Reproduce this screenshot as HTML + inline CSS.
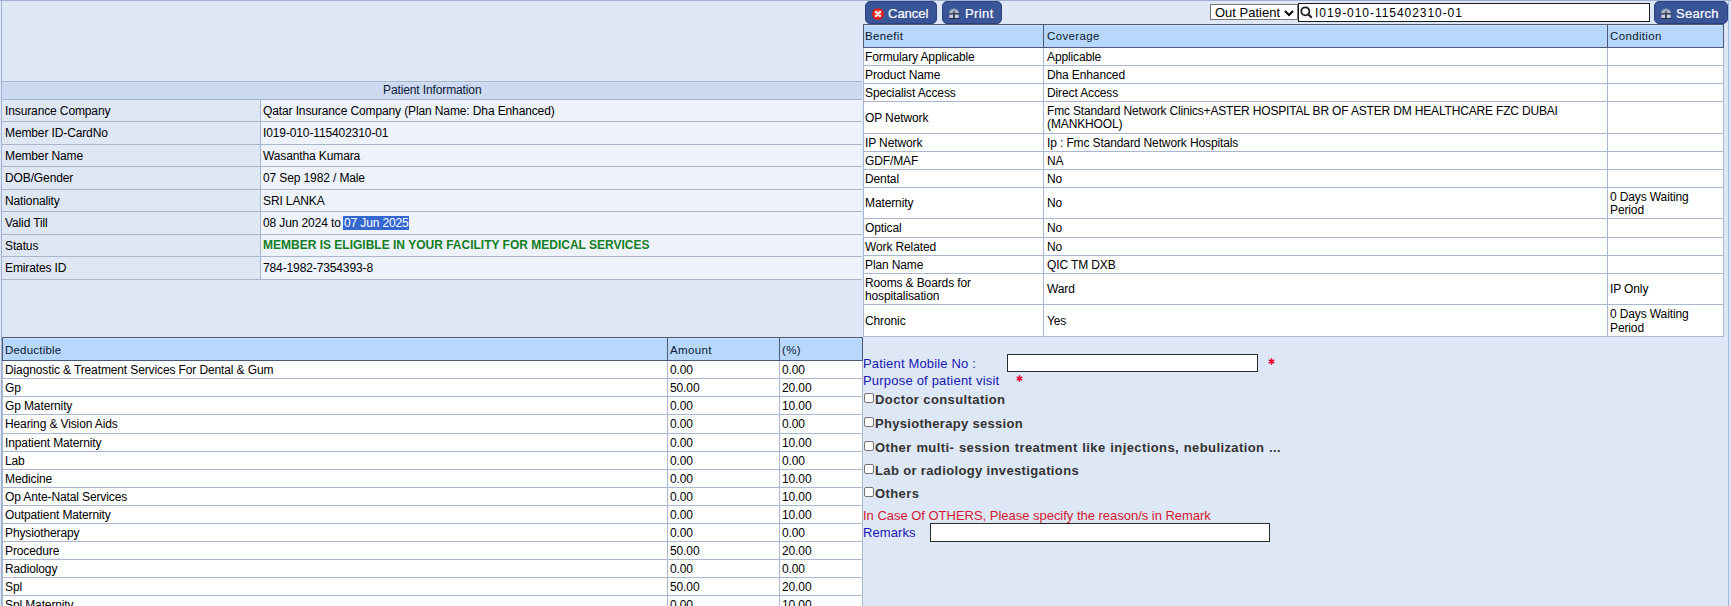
<!DOCTYPE html>
<html><head><meta charset="utf-8"><style>
html,body{margin:0;padding:0;}
body{width:1731px;height:606px;overflow:hidden;position:relative;background:#dee7f5;font-family:"Liberation Sans", sans-serif;}
.a{position:absolute;}
.t{position:absolute;white-space:nowrap;line-height:normal;letter-spacing:-0.12px;}
.t b{letter-spacing:0;}
.h{letter-spacing:0.35px;}
.m{font-size:12px;line-height:13px;color:#000;}
.sel{background:#3468d0;color:#fff;margin-left:-1px;padding-left:1px;}
.btn{position:absolute;top:1px;height:23px;box-sizing:border-box;background:#3a5597;border:1px solid #2c427f;border-radius:5px;}
.btn span{position:absolute;top:4px;color:#fff;font-size:13px;line-height:15px;white-space:nowrap;-webkit-text-stroke:0.2px #fff;}
.ic{position:absolute;}
.sel-box{position:absolute;left:1210px;top:4px;width:88px;height:16px;box-sizing:border-box;background:#fff;border:1px solid #767676;}
.sel-box span{position:absolute;left:4px;top:0px;font-size:13px;line-height:15px;color:#000;white-space:nowrap;}
.srch{position:absolute;left:1298px;top:3px;width:352px;height:19px;box-sizing:border-box;background:#fff;border:1px solid #1a1a1a;}
.srch span{position:absolute;left:16px;top:2px;font-size:12px;line-height:14px;color:#000;white-space:nowrap;letter-spacing:0.95px;}
.cb{position:absolute;width:10px;height:10px;box-sizing:border-box;border:1px solid #767676;border-radius:2px;background:#fff;}
</style></head><body>
<div class="a" style="left:0px;top:0px;width:1731px;height:1px;background:#a0b2d4;"></div>
<div class="a" style="left:1px;top:0px;width:1px;height:606px;background:#a0b2d4;"></div>
<div class="a" style="left:2px;top:82px;width:860px;height:17px;background:#cdd8f1;"></div>
<div class="a" style="left:2px;top:82px;width:860px;height:1px;background:#d3e0f4;"></div>
<div class="a" style="left:2px;top:100px;width:258px;height:21px;background:#dfe6f4;"></div>
<div class="a" style="left:261px;top:100px;width:601px;height:21px;background:#edf2fb;"></div>
<div class="a" style="left:2px;top:122px;width:258px;height:22px;background:#dfe6f4;"></div>
<div class="a" style="left:261px;top:122px;width:601px;height:22px;background:#edf2fb;"></div>
<div class="a" style="left:2px;top:145px;width:258px;height:21px;background:#dfe6f4;"></div>
<div class="a" style="left:261px;top:145px;width:601px;height:21px;background:#edf2fb;"></div>
<div class="a" style="left:2px;top:167px;width:258px;height:22px;background:#dfe6f4;"></div>
<div class="a" style="left:261px;top:167px;width:601px;height:22px;background:#edf2fb;"></div>
<div class="a" style="left:2px;top:190px;width:258px;height:21px;background:#dfe6f4;"></div>
<div class="a" style="left:261px;top:190px;width:601px;height:21px;background:#edf2fb;"></div>
<div class="a" style="left:2px;top:212px;width:258px;height:22px;background:#dfe6f4;"></div>
<div class="a" style="left:261px;top:212px;width:601px;height:22px;background:#edf2fb;"></div>
<div class="a" style="left:2px;top:235px;width:258px;height:21px;background:#dfe6f4;"></div>
<div class="a" style="left:261px;top:235px;width:601px;height:21px;background:#edf2fb;"></div>
<div class="a" style="left:2px;top:257px;width:258px;height:22px;background:#dfe6f4;"></div>
<div class="a" style="left:261px;top:257px;width:601px;height:22px;background:#edf2fb;"></div>
<div class="a" style="left:2px;top:81px;width:860px;height:1px;background:#a7b6cd;"></div>
<div class="a" style="left:2px;top:99px;width:860px;height:1px;background:#a7b6cd;"></div>
<div class="a" style="left:2px;top:121px;width:860px;height:1px;background:#a7b6cd;"></div>
<div class="a" style="left:2px;top:144px;width:860px;height:1px;background:#a7b6cd;"></div>
<div class="a" style="left:2px;top:166px;width:860px;height:1px;background:#a7b6cd;"></div>
<div class="a" style="left:2px;top:189px;width:860px;height:1px;background:#a7b6cd;"></div>
<div class="a" style="left:2px;top:211px;width:860px;height:1px;background:#a7b6cd;"></div>
<div class="a" style="left:2px;top:234px;width:860px;height:1px;background:#a7b6cd;"></div>
<div class="a" style="left:2px;top:256px;width:860px;height:1px;background:#a7b6cd;"></div>
<div class="a" style="left:2px;top:279px;width:860px;height:1px;background:#a7b6cd;"></div>
<div class="a" style="left:260px;top:100px;width:1px;height:179px;background:#a7b6cd;"></div>
<div class="t" style="left:383px;top:83px;font-size:12px;color:#0c1a36;font-weight:normal;">Patient Information</div>
<div class="t" style="left:5px;top:104px;font-size:12px;color:#000;font-weight:normal;">Insurance Company</div>
<div class="t" style="left:263px;top:104px;font-size:12px;color:#000;font-weight:normal;">Qatar Insurance Company (Plan Name: Dha Enhanced)</div>
<div class="t" style="left:5px;top:126px;font-size:12px;color:#000;font-weight:normal;">Member ID-CardNo</div>
<div class="t" style="left:263px;top:126px;font-size:12px;color:#000;font-weight:normal;">I019-010-115402310-01</div>
<div class="t" style="left:5px;top:149px;font-size:12px;color:#000;font-weight:normal;">Member Name</div>
<div class="t" style="left:263px;top:149px;font-size:12px;color:#000;font-weight:normal;">Wasantha Kumara</div>
<div class="t" style="left:5px;top:171px;font-size:12px;color:#000;font-weight:normal;">DOB/Gender</div>
<div class="t" style="left:263px;top:171px;font-size:12px;color:#000;font-weight:normal;">07 Sep 1982 / Male</div>
<div class="t" style="left:5px;top:194px;font-size:12px;color:#000;font-weight:normal;">Nationality</div>
<div class="t" style="left:263px;top:194px;font-size:12px;color:#000;font-weight:normal;">SRI LANKA</div>
<div class="t" style="left:5px;top:216px;font-size:12px;color:#000;font-weight:normal;">Valid Till</div>
<div class="t" style="left:263px;top:216px;font-size:12px;color:#000;font-weight:normal;">08 Jun 2024 to <span class="sel">07 Jun 2025</span></div>
<div class="t" style="left:5px;top:239px;font-size:12px;color:#000;font-weight:normal;">Status</div>
<div class="t" style="left:263px;top:238px;font-size:12px;color:#000;font-weight:normal;"><b style="color:#137e22">MEMBER IS ELIGIBLE IN YOUR FACILITY FOR MEDICAL SERVICES</b></div>
<div class="t" style="left:5px;top:261px;font-size:12px;color:#000;font-weight:normal;">Emirates ID</div>
<div class="t" style="left:263px;top:261px;font-size:12px;color:#000;font-weight:normal;">784-1982-7354393-8</div>
<div class="a" style="left:2px;top:337px;width:860px;height:269px;background:#ffffff;"></div>
<div class="a" style="left:2px;top:337px;width:861px;height:24px;background:#b7d8fc;"></div>
<div class="a" style="left:3px;top:338px;width:859px;height:1px;background:#cde3fb;"></div>
<div class="a" style="left:2px;top:337px;width:861px;height:1px;background:#4b5a72;"></div>
<div class="a" style="left:2px;top:360px;width:861px;height:1px;background:#4b5a72;"></div>
<div class="a" style="left:2px;top:337px;width:1px;height:24px;background:#4b5a72;"></div>
<div class="a" style="left:862px;top:337px;width:1px;height:24px;background:#4b5a72;"></div>
<div class="a" style="left:667px;top:337px;width:1px;height:24px;background:#4b5a72;"></div>
<div class="a" style="left:779px;top:337px;width:1px;height:24px;background:#4b5a72;"></div>
<div class="a" style="left:2px;top:361px;width:1px;height:245px;background:#a9b8d0;"></div>
<div class="a" style="left:667px;top:361px;width:1px;height:245px;background:#a9b8d0;"></div>
<div class="a" style="left:779px;top:361px;width:1px;height:245px;background:#a9b8d0;"></div>
<div class="a" style="left:862px;top:361px;width:1px;height:245px;background:#a9b8d0;"></div>
<div class="a" style="left:2px;top:378px;width:860px;height:1px;background:#a9b8d0;"></div>
<div class="a" style="left:2px;top:396px;width:860px;height:1px;background:#a9b8d0;"></div>
<div class="a" style="left:2px;top:414px;width:860px;height:1px;background:#a9b8d0;"></div>
<div class="a" style="left:2px;top:433px;width:860px;height:1px;background:#a9b8d0;"></div>
<div class="a" style="left:2px;top:451px;width:860px;height:1px;background:#a9b8d0;"></div>
<div class="a" style="left:2px;top:469px;width:860px;height:1px;background:#a9b8d0;"></div>
<div class="a" style="left:2px;top:487px;width:860px;height:1px;background:#a9b8d0;"></div>
<div class="a" style="left:2px;top:505px;width:860px;height:1px;background:#a9b8d0;"></div>
<div class="a" style="left:2px;top:523px;width:860px;height:1px;background:#a9b8d0;"></div>
<div class="a" style="left:2px;top:541px;width:860px;height:1px;background:#a9b8d0;"></div>
<div class="a" style="left:2px;top:559px;width:860px;height:1px;background:#a9b8d0;"></div>
<div class="a" style="left:2px;top:577px;width:860px;height:1px;background:#a9b8d0;"></div>
<div class="a" style="left:2px;top:595px;width:860px;height:1px;background:#a9b8d0;"></div>
<div class="a" style="left:2px;top:613px;width:860px;height:1px;background:#a9b8d0;"></div>
<div class="t h" style="left:5px;top:344px;font-size:11.5px;color:#0c1a30;font-weight:normal;letter-spacing:0.2px">Deductible</div>
<div class="t h" style="left:670px;top:344px;font-size:11.5px;color:#0c1a30;font-weight:normal;">Amount</div>
<div class="t h" style="left:782px;top:344px;font-size:11.5px;color:#0c1a30;font-weight:normal;">(%)</div>
<div class="t" style="left:5px;top:363px;font-size:12px;color:#000;font-weight:normal;">Diagnostic &amp; Treatment Services For Dental &amp; Gum</div>
<div class="t" style="left:670px;top:363px;font-size:12px;color:#000;font-weight:normal;">0.00</div>
<div class="t" style="left:782px;top:363px;font-size:12px;color:#000;font-weight:normal;">0.00</div>
<div class="t" style="left:5px;top:381px;font-size:12px;color:#000;font-weight:normal;">Gp</div>
<div class="t" style="left:670px;top:381px;font-size:12px;color:#000;font-weight:normal;">50.00</div>
<div class="t" style="left:782px;top:381px;font-size:12px;color:#000;font-weight:normal;">20.00</div>
<div class="t" style="left:5px;top:399px;font-size:12px;color:#000;font-weight:normal;">Gp Maternity</div>
<div class="t" style="left:670px;top:399px;font-size:12px;color:#000;font-weight:normal;">0.00</div>
<div class="t" style="left:782px;top:399px;font-size:12px;color:#000;font-weight:normal;">10.00</div>
<div class="t" style="left:5px;top:417px;font-size:12px;color:#000;font-weight:normal;">Hearing &amp; Vision Aids</div>
<div class="t" style="left:670px;top:417px;font-size:12px;color:#000;font-weight:normal;">0.00</div>
<div class="t" style="left:782px;top:417px;font-size:12px;color:#000;font-weight:normal;">0.00</div>
<div class="t" style="left:5px;top:436px;font-size:12px;color:#000;font-weight:normal;">Inpatient Maternity</div>
<div class="t" style="left:670px;top:436px;font-size:12px;color:#000;font-weight:normal;">0.00</div>
<div class="t" style="left:782px;top:436px;font-size:12px;color:#000;font-weight:normal;">10.00</div>
<div class="t" style="left:5px;top:454px;font-size:12px;color:#000;font-weight:normal;">Lab</div>
<div class="t" style="left:670px;top:454px;font-size:12px;color:#000;font-weight:normal;">0.00</div>
<div class="t" style="left:782px;top:454px;font-size:12px;color:#000;font-weight:normal;">0.00</div>
<div class="t" style="left:5px;top:472px;font-size:12px;color:#000;font-weight:normal;">Medicine</div>
<div class="t" style="left:670px;top:472px;font-size:12px;color:#000;font-weight:normal;">0.00</div>
<div class="t" style="left:782px;top:472px;font-size:12px;color:#000;font-weight:normal;">10.00</div>
<div class="t" style="left:5px;top:490px;font-size:12px;color:#000;font-weight:normal;">Op Ante-Natal Services</div>
<div class="t" style="left:670px;top:490px;font-size:12px;color:#000;font-weight:normal;">0.00</div>
<div class="t" style="left:782px;top:490px;font-size:12px;color:#000;font-weight:normal;">10.00</div>
<div class="t" style="left:5px;top:508px;font-size:12px;color:#000;font-weight:normal;">Outpatient Maternity</div>
<div class="t" style="left:670px;top:508px;font-size:12px;color:#000;font-weight:normal;">0.00</div>
<div class="t" style="left:782px;top:508px;font-size:12px;color:#000;font-weight:normal;">10.00</div>
<div class="t" style="left:5px;top:526px;font-size:12px;color:#000;font-weight:normal;">Physiotherapy</div>
<div class="t" style="left:670px;top:526px;font-size:12px;color:#000;font-weight:normal;">0.00</div>
<div class="t" style="left:782px;top:526px;font-size:12px;color:#000;font-weight:normal;">0.00</div>
<div class="t" style="left:5px;top:544px;font-size:12px;color:#000;font-weight:normal;">Procedure</div>
<div class="t" style="left:670px;top:544px;font-size:12px;color:#000;font-weight:normal;">50.00</div>
<div class="t" style="left:782px;top:544px;font-size:12px;color:#000;font-weight:normal;">20.00</div>
<div class="t" style="left:5px;top:562px;font-size:12px;color:#000;font-weight:normal;">Radiology</div>
<div class="t" style="left:670px;top:562px;font-size:12px;color:#000;font-weight:normal;">0.00</div>
<div class="t" style="left:782px;top:562px;font-size:12px;color:#000;font-weight:normal;">0.00</div>
<div class="t" style="left:5px;top:580px;font-size:12px;color:#000;font-weight:normal;">Spl</div>
<div class="t" style="left:670px;top:580px;font-size:12px;color:#000;font-weight:normal;">50.00</div>
<div class="t" style="left:782px;top:580px;font-size:12px;color:#000;font-weight:normal;">20.00</div>
<div class="t" style="left:5px;top:598px;font-size:12px;color:#000;font-weight:normal;">Spl Maternity</div>
<div class="t" style="left:670px;top:598px;font-size:12px;color:#000;font-weight:normal;">0.00</div>
<div class="t" style="left:782px;top:598px;font-size:12px;color:#000;font-weight:normal;">10.00</div>
<div class="a" style="left:1728px;top:0px;width:1px;height:606px;background:#a8b5d8;"></div>
<div class="a" style="left:863px;top:24px;width:861px;height:313px;background:#ffffff;"></div>
<div class="a" style="left:863px;top:24px;width:861px;height:24px;background:#b7d8fc;"></div>
<div class="a" style="left:864px;top:25px;width:859px;height:1px;background:#cde3fb;"></div>
<div class="a" style="left:863px;top:24px;width:861px;height:1px;background:#4b5a72;"></div>
<div class="a" style="left:863px;top:47px;width:861px;height:1px;background:#4b5a72;"></div>
<div class="a" style="left:863px;top:24px;width:1px;height:24px;background:#4b5a72;"></div>
<div class="a" style="left:1723px;top:24px;width:1px;height:24px;background:#4b5a72;"></div>
<div class="a" style="left:1043px;top:24px;width:1px;height:24px;background:#4b5a72;"></div>
<div class="a" style="left:1607px;top:24px;width:1px;height:24px;background:#4b5a72;"></div>
<div class="a" style="left:863px;top:48px;width:1px;height:289px;background:#a9b8d0;"></div>
<div class="a" style="left:1723px;top:48px;width:1px;height:289px;background:#a9b8d0;"></div>
<div class="a" style="left:1043px;top:48px;width:1px;height:289px;background:#a9b8d0;"></div>
<div class="a" style="left:1607px;top:48px;width:1px;height:289px;background:#a9b8d0;"></div>
<div class="a" style="left:863px;top:65px;width:861px;height:1px;background:#a9b8d0;"></div>
<div class="a" style="left:863px;top:83px;width:861px;height:1px;background:#a9b8d0;"></div>
<div class="a" style="left:863px;top:101px;width:861px;height:1px;background:#a9b8d0;"></div>
<div class="a" style="left:863px;top:133px;width:861px;height:1px;background:#a9b8d0;"></div>
<div class="a" style="left:863px;top:151px;width:861px;height:1px;background:#a9b8d0;"></div>
<div class="a" style="left:863px;top:169px;width:861px;height:1px;background:#a9b8d0;"></div>
<div class="a" style="left:863px;top:187px;width:861px;height:1px;background:#a9b8d0;"></div>
<div class="a" style="left:863px;top:218px;width:861px;height:1px;background:#a9b8d0;"></div>
<div class="a" style="left:863px;top:237px;width:861px;height:1px;background:#a9b8d0;"></div>
<div class="a" style="left:863px;top:255px;width:861px;height:1px;background:#a9b8d0;"></div>
<div class="a" style="left:863px;top:273px;width:861px;height:1px;background:#a9b8d0;"></div>
<div class="a" style="left:863px;top:304px;width:861px;height:1px;background:#a9b8d0;"></div>
<div class="a" style="left:863px;top:336px;width:861px;height:1px;background:#a9b8d0;"></div>
<div class="t h" style="left:865px;top:30px;font-size:11.5px;color:#0c1a30;font-weight:normal;">Benefit</div>
<div class="t h" style="left:1047px;top:30px;font-size:11.5px;color:#0c1a30;font-weight:normal;">Coverage</div>
<div class="t h" style="left:1610px;top:30px;font-size:11.5px;color:#0c1a30;font-weight:normal;">Condition</div>
<div class="t" style="left:865px;top:50px;font-size:12px;color:#000;font-weight:normal;">Formulary Applicable</div>
<div class="t" style="left:1047px;top:50px;font-size:12px;color:#000;font-weight:normal;">Applicable</div>
<div class="t" style="left:865px;top:68px;font-size:12px;color:#000;font-weight:normal;">Product Name</div>
<div class="t" style="left:1047px;top:68px;font-size:12px;color:#000;font-weight:normal;">Dha Enhanced</div>
<div class="t" style="left:865px;top:86px;font-size:12px;color:#000;font-weight:normal;">Specialist Access</div>
<div class="t" style="left:1047px;top:86px;font-size:12px;color:#000;font-weight:normal;">Direct Access</div>
<div class="t" style="left:865px;top:111px;font-size:12px;color:#000;font-weight:normal;">OP Network</div>
<div class="t m" style="left:1047px;top:105px;line-height:13px;"><span style="letter-spacing:-0.17px">Fmc Standard Network Clinics+ASTER HOSPITAL BR OF ASTER DM HEALTHCARE FZC DUBAI</span><br>(MANKHOOL)</div>
<div class="t" style="left:865px;top:136px;font-size:12px;color:#000;font-weight:normal;">IP Network</div>
<div class="t" style="left:1047px;top:136px;font-size:12px;color:#000;font-weight:normal;">Ip : Fmc Standard Network Hospitals</div>
<div class="t" style="left:865px;top:154px;font-size:12px;color:#000;font-weight:normal;">GDF/MAF</div>
<div class="t" style="left:1047px;top:154px;font-size:12px;color:#000;font-weight:normal;">NA</div>
<div class="t" style="left:865px;top:172px;font-size:12px;color:#000;font-weight:normal;">Dental</div>
<div class="t" style="left:1047px;top:172px;font-size:12px;color:#000;font-weight:normal;">No</div>
<div class="t" style="left:865px;top:196px;font-size:12px;color:#000;font-weight:normal;">Maternity</div>
<div class="t" style="left:1047px;top:196px;font-size:12px;color:#000;font-weight:normal;">No</div>
<div class="t m" style="left:1610px;top:191px;line-height:13px;">0 Days Waiting<br>Period</div>
<div class="t" style="left:865px;top:221px;font-size:12px;color:#000;font-weight:normal;">Optical</div>
<div class="t" style="left:1047px;top:221px;font-size:12px;color:#000;font-weight:normal;">No</div>
<div class="t" style="left:865px;top:240px;font-size:12px;color:#000;font-weight:normal;">Work Related</div>
<div class="t" style="left:1047px;top:240px;font-size:12px;color:#000;font-weight:normal;">No</div>
<div class="t" style="left:865px;top:258px;font-size:12px;color:#000;font-weight:normal;">Plan Name</div>
<div class="t" style="left:1047px;top:258px;font-size:12px;color:#000;font-weight:normal;">QIC TM DXB</div>
<div class="t m" style="left:865px;top:277px;line-height:13px;">Rooms &amp; Boards for<br>hospitalisation</div>
<div class="t" style="left:1047px;top:282px;font-size:12px;color:#000;font-weight:normal;">Ward</div>
<div class="t" style="left:1610px;top:282px;font-size:12px;color:#000;font-weight:normal;">IP Only</div>
<div class="t" style="left:865px;top:314px;font-size:12px;color:#000;font-weight:normal;">Chronic</div>
<div class="t" style="left:1047px;top:314px;font-size:12px;color:#000;font-weight:normal;">Yes</div>
<div class="t m" style="left:1610px;top:307px;line-height:14px;">0 Days Waiting<br>Period</div>
<div class="btn" style="left:865px;width:72px;"><svg class="ic" style="left:6px;top:6px" width="12" height="12" viewBox="0 0 12 12"><rect x="0.2" y="0.2" width="11.6" height="11.6" rx="5.6" fill="#e21a1a"/><circle cx="6" cy="5.8" r="4" fill="#ff4438"/><path d="M3.9 3.9 L8.1 8.1 M8.1 3.9 L3.9 8.1" stroke="#fff" stroke-width="2.1" stroke-linecap="round"/></svg><span style="left:22px;letter-spacing:0px">Cancel</span></div>
<div class="btn" style="left:942px;width:60px;"><svg class="ic" style="left:5px;top:6px" width="12" height="11" viewBox="0 0 12 11"><path d="M0.6 5.6 Q1.2 1 6 0.6 Q10.8 1 11.4 5.6 Z" fill="#9aa4b9"/><path d="M2.8 4.6 Q6 1.6 9.2 4.6" stroke="#c9d1e2" stroke-width="1" fill="none"/><rect x="0.6" y="5.4" width="10.8" height="1.2" fill="#262c3e"/><rect x="1.4" y="6.6" width="3.8" height="3.6" fill="#c9d0d8"/><rect x="6.8" y="6.6" width="3.8" height="3.6" fill="#c9d0d8"/><rect x="5.3" y="3" width="1.4" height="7.6" fill="#3c4458"/><rect x="1" y="10.2" width="10.6" height="0.8" fill="#1c2236"/></svg><span style="left:22px;letter-spacing:0.4px">Print</span></div>
<div class="btn" style="left:1654px;width:74px;"><svg class="ic" style="left:5px;top:6px" width="12" height="11" viewBox="0 0 12 11"><path d="M0.6 5.6 Q1.2 1 6 0.6 Q10.8 1 11.4 5.6 Z" fill="#9aa4b9"/><path d="M2.8 4.6 Q6 1.6 9.2 4.6" stroke="#c9d1e2" stroke-width="1" fill="none"/><rect x="0.6" y="5.4" width="10.8" height="1.2" fill="#262c3e"/><rect x="1.4" y="6.6" width="3.8" height="3.6" fill="#c9d0d8"/><rect x="6.8" y="6.6" width="3.8" height="3.6" fill="#c9d0d8"/><rect x="5.3" y="3" width="1.4" height="7.6" fill="#3c4458"/><rect x="1" y="10.2" width="10.6" height="0.8" fill="#1c2236"/></svg><span style="left:21px;letter-spacing:0.25px">Search</span></div>
<div class="sel-box"><span>Out Patient</span><svg style="position:absolute;left:73px;top:5px" width="10" height="7" viewBox="0 0 10 7"><path d="M1 1 L5 5 L9 1" stroke="#000" stroke-width="2" fill="none"/></svg></div>
<div class="srch"><svg style="position:absolute;left:1px;top:2px" width="13" height="13" viewBox="0 0 13 13"><circle cx="5.3" cy="5.3" r="4" stroke="#222" stroke-width="1.8" fill="none"/><path d="M8.2 8.2 L11.8 11.8" stroke="#222" stroke-width="2.2"/></svg><span>I019-010-115402310-01</span></div>
<div class="t" style="left:863px;top:356px;font-size:13px;color:#1818b6;font-weight:normal;letter-spacing:0.17px">Patient Mobile No :</div>
<div class="a" style="left:1007px;top:354px;width:251px;height:18px;background:#fff;border:1px solid #2a2a2a;box-sizing:border-box;"></div>
<svg class="a" style="left:1267.5px;top:357.5px" width="7" height="7" viewBox="0 0 7 7"><path d="M3.5 0.3 V6.7 M0.7 1.9 L6.3 5.1 M0.7 5.1 L6.3 1.9" stroke="#e4002b" stroke-width="1.5"/><circle cx="3.5" cy="3.5" r="1.6" fill="#e4002b"/></svg>
<div class="t" style="left:863px;top:373px;font-size:13px;color:#1818b6;font-weight:normal;letter-spacing:0.2px">Purpose of patient visit</div>
<svg class="a" style="left:1015.5px;top:374.5px" width="7" height="7" viewBox="0 0 7 7"><path d="M3.5 0.3 V6.7 M0.7 1.9 L6.3 5.1 M0.7 5.1 L6.3 1.9" stroke="#e4002b" stroke-width="1.5"/><circle cx="3.5" cy="3.5" r="1.6" fill="#e4002b"/></svg>
<div class="cb" style="left:864px;top:393px"></div>
<div class="t" style="left:875px;top:392px;font-size:13px;color:#333;font-weight:bold;letter-spacing:0.4px;">Doctor consultation</div>
<div class="cb" style="left:864px;top:417px"></div>
<div class="t" style="left:875px;top:416px;font-size:13px;color:#333;font-weight:bold;letter-spacing:0.3px;">Physiotherapy session</div>
<div class="cb" style="left:864px;top:441px"></div>
<div class="t" style="left:875px;top:440px;font-size:13px;color:#333;font-weight:bold;letter-spacing:0.4px;word-spacing:0.7px;">Other multi- session treatment like injections, nebulization ...</div>
<div class="cb" style="left:864px;top:464px"></div>
<div class="t" style="left:875px;top:463px;font-size:13px;color:#333;font-weight:bold;letter-spacing:0.36px;">Lab or radiology investigations</div>
<div class="cb" style="left:864px;top:487px"></div>
<div class="t" style="left:875px;top:486px;font-size:13px;color:#333;font-weight:bold;letter-spacing:0.4px;">Others</div>
<div class="t" style="left:863px;top:508px;font-size:13px;color:#d41830;font-weight:normal;letter-spacing:-0.02px">In Case Of OTHERS, Please specify the reason/s in Remark</div>
<div class="t" style="left:863px;top:525px;font-size:13px;color:#1818b6;font-weight:normal;letter-spacing:0.1px">Remarks</div>
<div class="a" style="left:930px;top:523px;width:340px;height:19px;background:#fff;border:1px solid #2a2a2a;box-sizing:border-box;"></div>
</body></html>
